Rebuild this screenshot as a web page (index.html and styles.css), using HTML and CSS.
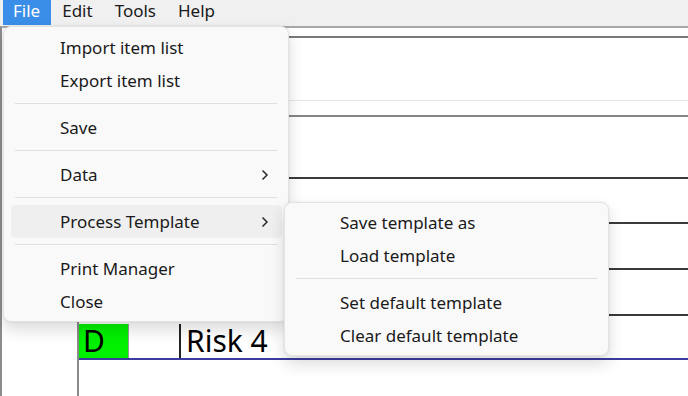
FILE: index.html
```html
<!DOCTYPE html>
<html lang="en">
<head>
  <meta charset="UTF-8">
  <title>Process Template</title>
  <link rel="stylesheet" href="styles.css">
</head>
<body>
  <!-- Barra de menu -->
  <div class="menubar">
    <span class="menubar-item active">File</span>
    <span class="menubar-item">Edit</span>
    <span class="menubar-item">Tools</span>
    <span class="menubar-item">Help</span>
  </div>

  <!-- Área de trabalho -->
  <div class="workspace">
    <div class="sidebar"></div>
    <div class="sheet">
      <div class="row row-1"></div>
      <div class="row row-2"></div>
      <div class="row row-3"></div>
      <div class="row row-4"></div>
      <div class="row row-5"></div>
      <div class="row row-6"></div>
      <div class="row row-7"></div>
      <div class="row row-risk">
        <div class="cell cell-code">D</div>
        <div class="cell cell-empty"></div>
        <div class="cell cell-name">Risk 4</div>
      </div>
    </div>
  </div>

  <!-- Menu File aberto -->
  <div class="menu file-menu">
    <div class="menu-item">Import item list</div>
    <div class="menu-item">Export item list</div>
    <div class="menu-sep"></div>
    <div class="menu-item">Save</div>
    <div class="menu-sep"></div>
    <div class="menu-item">Data
      <svg class="chevron" width="8" height="12" viewBox="0 0 8 12"><path d="M1.5 1.5 L6 6 L1.5 10.5" fill="none" stroke="#2b2b2b" stroke-width="1.5"/></svg>
    </div>
    <div class="menu-sep"></div>
    <div class="menu-item hover">Process Template
      <svg class="chevron" width="8" height="12" viewBox="0 0 8 12"><path d="M1.5 1.5 L6 6 L1.5 10.5" fill="none" stroke="#2b2b2b" stroke-width="1.5"/></svg>
    </div>
    <div class="menu-sep"></div>
    <div class="menu-item">Print Manager</div>
    <div class="menu-item">Close</div>
  </div>

  <!-- Submenu Process Template -->
  <div class="menu sub-menu">
    <div class="menu-item">Save template as</div>
    <div class="menu-item">Load template</div>
    <div class="menu-sep"></div>
    <div class="menu-item">Set default template</div>
    <div class="menu-item">Clear default template</div>
  </div>
</body>
</html>
```

FILE: styles.css
```css
/* Estilos globais */
body {
  margin: 0;
  padding: 0;
  background-color: #fff;
  color: #1a1a1a;
  font-family: "Noto Sans", "Open Sans", sans-serif;
  font-size: 17px;
  overflow: hidden;
  height: 396px;
}

/* Barra de menu */
.menubar {
  display: flex;
  height: 26px;
  padding-left: 3px;
  background-color: #f0f0f0;
}
.menubar-item {
  padding: 0 11px 0 10px;
  line-height: 22px;
  height: 25px;
}
.menubar-item + .menubar-item {
  padding-left: 11px;
}
.menubar-item.active {
  background-color: #3a8ee8;
  color: #fff;
}

/* Área de trabalho */
.workspace {
  display: flex;
  height: 370px;
  border-top: 2px solid #a8a8a8;
  border-left: 2px solid #8c8c8c;
}
.sidebar {
  width: 75px;
  flex-shrink: 0;
}
.sheet {
  flex: 1;
  border-left: 2px solid #8a8a8a;
}
.row {
  border-bottom: 2px solid #3a3a3a;
}
.row-1 { height: 8px; border-bottom-color: #7a7a7a; }
.row-2 { height: 62px; border-bottom: 1px solid #e6e6e6; }
.row-3 { height: 14px; border-bottom-color: #858585; }
.row-4 { height: 60px; }
.row-5 { height: 43px; }
.row-6 { height: 44px; }
.row-7 { height: 44px; }
.row-risk {
  display: flex;
  height: 42px;
  border-bottom-color: #3b3ba0;
}
.cell {
  margin-top: 8px;
  font-size: 30px;
  line-height: 34px;
  color: #000;
}
.cell-code {
  width: 45px;
  padding-left: 4px;
  background-color: #00f000;
  border-right: 1px solid #9a9a9a;
}
.cell-empty {
  width: 50px;
  border-right: 2px solid #222;
}
.cell-name {
  padding-left: 5px;
}

/* Menus suspensos */
.menu {
  position: absolute;
  box-sizing: border-box;
  background-color: #f9f9f9;
  border: 1px solid #e3e3e3;
  border-radius: 8px;
  box-shadow: 0 8px 16px rgba(0, 0, 0, 0.14), 0 0 3px rgba(0, 0, 0, 0.08);
}
.file-menu {
  left: 3px;
  top: 26px;
  width: 286px;
  padding: 4px 0 3px;
}
.sub-menu {
  left: 284px;
  top: 202px;
  width: 325px;
  padding: 3px 0;
}
.menu-item {
  display: flex;
  align-items: center;
  justify-content: space-between;
  height: 33px;
  margin: 0 6px 0 7px;
  padding: 0 13px 0 49px;
  border-radius: 4px;
}
.sub-menu .menu-item {
  padding-left: 48px;
}
.menu-item.hover {
  background-color: #efefef;
}
.menu-sep {
  height: 1px;
  margin: 6px 11px 7px;
  background-color: #e0e0e0;
}
```
